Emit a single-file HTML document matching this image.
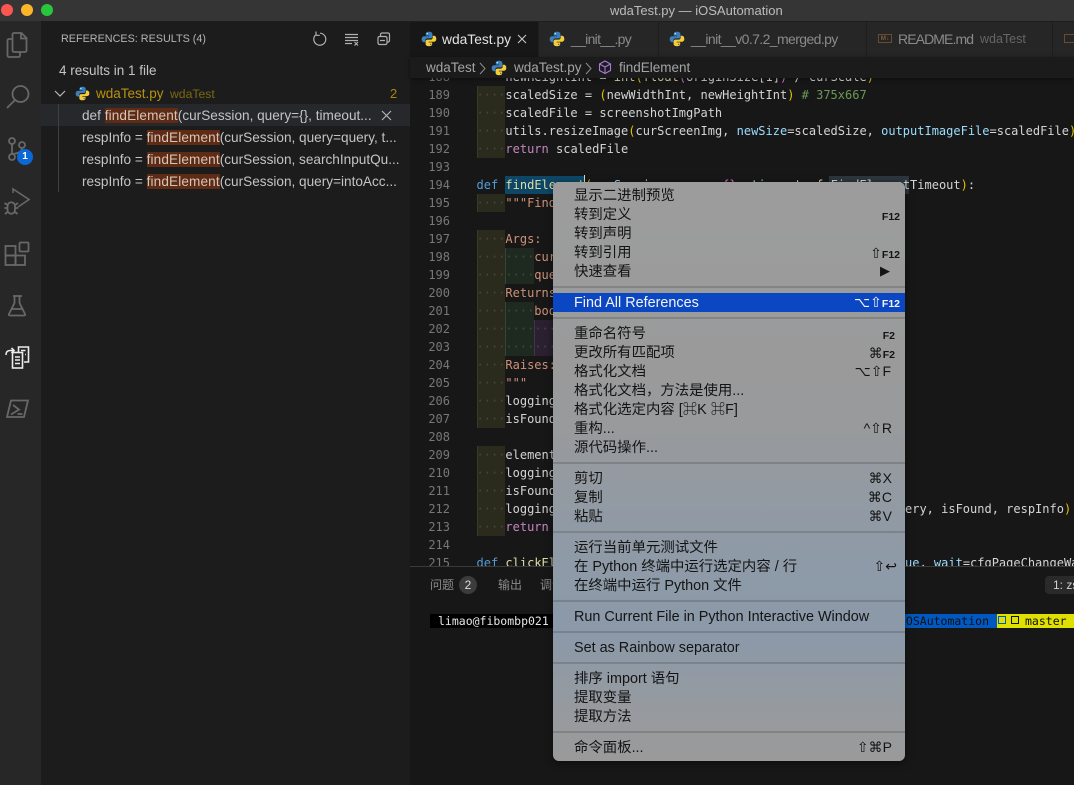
<!DOCTYPE html>
<html><head><meta charset="utf-8"><style>
*{box-sizing:border-box}
html,body{margin:0;padding:0;width:1074px;height:785px;overflow:hidden;background:#171717}
body{position:relative;font-family:"Liberation Sans","Noto Sans CJK SC",sans-serif}
.a{position:absolute;white-space:pre}
#ed{position:absolute;left:410px;top:78px;width:664px;height:490px;overflow:hidden;background:#171717}
#ed .l,#ed .n,#ed .g{position:absolute}
.n{left:0;width:40px;text-align:right;font:12px/18px "DejaVu Sans Mono",monospace;color:#777}
.l{left:66.5px;white-space:pre;font:12px/18px "DejaVu Sans Mono",monospace;color:#d4d4d4}
.d{color:#47473d}.k{color:#569cd6}.f{color:#dcdcaa}.r{color:#c586c0}.p{color:#9cdcfe}.c{color:#6a9955}.s{color:#ce9178}.y{color:#e5c100}.m{color:#da70d6}
.g1{background:#2a2a1d;border-left:1px solid #3a3a28}.g2{background:#1e2a20;border-left:1px solid #33453a}.g3{background:#2a2030;border-left:1px solid #42344a}
.row{position:absolute;left:82px;font-size:13.6px;line-height:22px;color:#c4c4c4;white-space:pre}
.row b{font-weight:normal;background:#5e2b14;color:#d6c4b8;letter-spacing:.12px}
.tab{position:absolute;top:22px;height:35px;background:#262626;line-height:35px;font-size:14px;color:#8a8a8a;white-space:pre}
#menu{position:absolute;left:553px;top:182px;width:352px;height:579px;border-radius:6px;overflow:hidden;background:linear-gradient(180deg,#9c9c9c 0%,#999a9b 40%,#8f9aa6 62%,#8b99a9 78%,#979a9e 92%,#9a9a9a 100%);box-shadow:0 2px 8px rgba(0,0,0,.5)}
#menu .i{position:absolute;left:21px;margin-top:1px;font-size:14.4px;line-height:20px;color:#141414;white-space:pre}
#menu .sc{position:absolute;text-align:right;font-size:14px;line-height:20px;color:#141414;white-space:pre;font-family:"Liberation Sans","DejaVu Sans",sans-serif}
#menu .sc small{font-size:10.5px;font-weight:bold}
#menu .h{position:absolute;left:0;width:352px;height:2px;background:rgba(60,60,60,.24)}
</style></head><body>
<svg width="0" height="0" style="position:absolute"><defs>
<symbol id="py" viewBox="0 0 16 16"><path d="M8 .8C5.3.8 4.8 1.900 4.800 3v1.600h3.400v.6H3.200C1.800 5.200.7 6.200.7 8.100s1 3.100 2.300 3.100h1.300V9.500c0-1.200.9-2.100 2.100-2.100h3.300c1 0 1.700-.8 1.700-1.800V3C11.300 1.800 10.300.8 8 .8z" fill="#3b7fbf"/><path d="M8 15.200c2.700 0 3.200-1.100 3.200-2.200v-1.600H7.800v-.6h5c1.400 0 2.500-1 2.500-2.900s-1-3.100-2.300-3.100h-1.300v1.700c0 1.200-.9 2.100-2.100 2.100H6.300c-1 0-1.700.8-1.700 1.800V13c.1 1.200 1.100 2.200 3.400 2.200z" fill="#f3cd3b"/><circle cx="6.300" cy="2.700" r=".7" fill="#cfe"/><circle cx="9.700" cy="13.300" r=".7" fill="#654"/></symbol>
</defs></svg>

<!-- title bar -->
<div class="a" style="left:0;top:0;width:1074px;height:21px;background:#353535"></div>
<div class="a" style="left:1px;top:4px;width:12px;height:12px;border-radius:50%;background:#fc5650"></div>
<div class="a" style="left:21px;top:4px;width:12px;height:12px;border-radius:50%;background:#fdb629"></div>
<div class="a" style="left:41px;top:4px;width:12px;height:12px;border-radius:50%;background:#28c73e"></div>
<div class="a" style="left:610px;top:2px;font-size:13px;line-height:17px;color:#bcbcbc">wdaTest.py — iOSAutomation</div>

<!-- activity bar -->
<div class="a" style="left:0;top:21px;width:41px;height:764px;background:#272727"></div>
<svg class="a" style="left:0;top:21px" width="41" height="420" fill="none" stroke="#686868" stroke-width="1.800">
<path d="M12 18H9a1.500 1.500 0 0 0-1.500 1.500V34.500A1.500 1.500 0 0 0 9 36h9.500a1.500 1.500 0 0 0 1.500-1.500V31"/>
<path d="M12.500 13.500a1.500 1.500 0 0 1 1.500-1.500h7.500l5 5v12.500a1.500 1.500 0 0 1-1.500 1.500H14a1.500 1.500 0 0 1-1.500-1.500zM21 12.500v5h5.500"/>
<circle cx="20.500" cy="73" r="8"/><path d="M15 79 7 87"/>
<circle cx="12" cy="120" r="3"/><circle cx="22" cy="124" r="3"/><circle cx="12" cy="136" r="3"/><path d="M12 123v10M22 127c0 4-4 5.500-10 6"/>
<path d="M13 172v-4l16 10.500L18 186" stroke-width="1.600"/><path d="M7.500 185a3.700 3.700 0 0 1 7.500 0v4a3.700 3.700 0 0 1-7.500 0zM4.500 182l3 2M18 182l-3 2M4.500 187h3M18 187h-3M5 193l3-2.500M17.500 193l-3-2.500"/>
<rect x="5.500" y="225" width="10" height="9.500"/><rect x="5.500" y="234.500" width="10" height="9.500"/><rect x="15.500" y="234.500" width="9.500" height="9.500"/><rect x="19.500" y="221.500" width="9" height="9" rx="1"/>
<path d="M13 275h9M14.500 275v7l-5.500 11c-.5 1 0 1.500 1 1.500h14c1 0 1.500-.5 1-1.500L19.500 282v-7M11 288h12"/>
<g stroke="#ececec" stroke-width="1.600"><path d="M6 334c0-3 1.500-4.500 4-4.500h3.500M11.500 327l2.500 2.500-2.500 2.500"/><path d="M18.500 331v-5h10v15H24"/><rect x="12.500" y="331.500" width="10" height="15.500" fill="#272727"/><path d="M15 336h5M15 339h5M15 342.500h5M21 329.500h4.500M25 333.500h.8"/></g>
<path d="M11 379.500h17l-4 16.500H7zM13 384l6 4.500-8 5M17.500 393h5"/>
</svg>
<div class="a" style="left:17px;top:149px;width:16px;height:16px;border-radius:50%;background:#0a69d6;color:#fff;font-size:10px;font-weight:bold;line-height:16px;text-align:center">1</div>

<!-- sidebar -->
<div class="a" style="left:41px;top:21px;width:369px;height:764px;background:#1c1c1c"></div>
<div class="a" style="left:61px;top:31px;font-size:10.8px;line-height:16px;color:#b4b4b4">REFERENCES: RESULTS (4)</div>
<svg class="a" style="left:310px;top:29px" width="85" height="20" fill="none" stroke="#b0b0b0" stroke-width="1.200">
<path d="M5.500 6a6 6 0 1 0 4.500-1.800M6 2.500v3.800h3.800"/>
<path d="M35 5.500h13M35 8.500h13M35 11.500h13M35 14.500h7M44.500 13l3.500 3.500M48 13l-3.500 3.500"/>
<rect x="68" y="7.500" width="9" height="8" rx="1.500"/><path d="M70.500 7.500V5.500a1.500 1.500 0 0 1 1.500-1.500h6a1.500 1.500 0 0 1 1.500 1.500v6a1.500 1.500 0 0 1-1.500 1.500H77M70 11.500h5"/>
</svg>
<div class="a" style="left:59px;top:62px;font-size:13.500px;line-height:18px;color:#c4c4c4">4 results in 1 file</div>
<svg class="a" style="left:54px;top:89px" width="13" height="10" fill="none" stroke="#b8b8b8" stroke-width="1.200"><path d="M1 2l5 5 5-5"/></svg>
<svg class="a" style="left:75px;top:86px" width="15" height="15"><use href="#py"/></svg>
<div class="a" style="left:96px;top:85px;font-size:13.500px;line-height:18px;color:#b8920c">wdaTest.py</div>
<div class="a" style="left:170px;top:85px;font-size:12.200px;line-height:18px;color:#7c6a10">wdaTest</div>
<div class="a" style="left:390px;top:85px;font-size:13px;line-height:18px;color:#a6860c">2</div>
<div class="a" style="left:41px;top:104px;width:369px;height:22px;background:#27282c"></div>
<div class="a" style="left:58px;top:104px;width:1px;height:88px;background:#404040"></div>
<div class="row" style="top:105px">def <b>findElement</b>(curSession, query={}, timeout...</div>
<div class="row" style="top:127px">respInfo = <b>findElement</b>(curSession, query=query, t...</div>
<div class="row" style="top:149px">respInfo = <b>findElement</b>(curSession, searchInputQu...</div>
<div class="row" style="top:171px">respInfo = <b>findElement</b>(curSession, query=intoAcc...</div>
<svg class="a" style="left:381px;top:110px" width="11" height="11" stroke="#b8b8b8" stroke-width="1.100"><path d="M1 1l9 9M10 1l-9 9"/></svg>

<!-- tabs -->
<div class="a" style="left:410px;top:21px;width:664px;height:36px;background:#1e1e1e"></div>
<div class="tab" style="left:410px;width:128px;background:#171717;color:#e2e2e2"><span style="position:absolute;left:32px;font-size:13.800px">wdaTest.py</span></div>
<svg class="a" style="left:421px;top:31px" width="16" height="16"><use href="#py"/></svg>
<svg class="a" style="left:517px;top:34px" width="10" height="10" stroke="#c8c8c8" stroke-width="1.100"><path d="M1 1l8 8M9 1l-8 8"/></svg>
<div class="tab" style="left:539px;width:119px"><span style="position:absolute;left:32px;letter-spacing:-.7px">__init__.py</span></div>
<svg class="a" style="left:549px;top:31px" width="16" height="16"><use href="#py"/></svg>
<div class="tab" style="left:659px;width:207px"><span style="position:absolute;left:32px;letter-spacing:-.6px">__init__v0.7.2_merged.py</span></div>
<svg class="a" style="left:669px;top:31px" width="16" height="16"><use href="#py"/></svg>
<div class="tab" style="left:867px;width:185px"><span style="position:absolute;left:31px;letter-spacing:-.9px">README.md</span><span style="position:absolute;left:113px;font-size:12.500px;color:#666">wdaTest</span></div>
<div class="a" style="left:878px;top:34px;width:14px;height:9px;border:1px solid #6a4a30;color:#7a5a3a;font-size:6.500px;line-height:7px;text-align:center;font-weight:bold">M↓</div>
<div class="tab" style="left:1053px;width:21px"></div>
<div class="a" style="left:1064px;top:34px;width:12px;height:9px;border:1px solid #6a4a30"></div>

<!-- breadcrumbs -->
<div class="a" style="left:410px;top:57px;width:664px;height:21px;background:#1b1b1b;box-shadow:0 1px 4px rgba(0,0,0,.5);z-index:2"></div>
<div style="position:absolute;z-index:3;left:426px;top:59px;font-size:13.500px;line-height:18px;color:#a4a4a4;white-space:pre">wdaTest</div>
<svg class="a" style="left:478px;top:61px;z-index:3" width="130" height="15" fill="none" stroke="#8e8e8e" stroke-width="1"><path d="M2 2l5 5.500-5 5.500"/><path d="M108 2l5 5.500-5 5.500"/></svg>
<svg class="a" style="left:491px;top:60px;z-index:3" width="16" height="16"><use href="#py"/></svg>
<div style="position:absolute;z-index:3;left:514px;top:59px;font-size:13.500px;line-height:18px;color:#a4a4a4;white-space:pre">wdaTest.py</div>
<svg class="a" style="left:598px;top:60px;z-index:3" width="15" height="15" fill="none" stroke="#a77ad8" stroke-width="1.100"><path d="M7 1l5.500 3v6.500L7 13.500 1.500 10.500V4zM1.500 4L7 7l5.500-3M7 7v6.500"/></svg>
<div style="position:absolute;z-index:3;left:619px;top:59px;font-size:13.500px;line-height:18px;color:#a4a4a4;white-space:pre">findElement</div>

<!-- editor -->
<div id="ed">
<div class="g g1" style="left:67px;top:8px;width:28px;height:72px"></div>
<div class="g g1" style="left:67px;top:116px;width:28px;height:18px"></div>
<div class="g g1" style="left:67px;top:152px;width:28px;height:198px"></div>
<div class="g g1" style="left:67px;top:368px;width:28px;height:90px"></div>
<div class="g g2" style="left:95px;top:170px;width:29px;height:36px"></div>
<div class="g g2" style="left:95px;top:224px;width:29px;height:54px"></div>
<div class="g g3" style="left:124px;top:242px;width:29px;height:36px"></div>
<div class="g" style="left:95px;top:98px;width:79px;height:18px;background:#0e4766"></div>
<div class="g" style="left:174px;top:97px;width:1px;height:19px;background:#d8d8d8"></div>
<div class="g" style="left:419px;top:98px;width:80px;height:18px;background:#2c363c"></div>

<div class="n" style="top:-10px">188</div><div class="l" style="top:-10px"><span class="d">····</span>newHeightInt = <span class="f">int</span><span class="y">(</span><span class="f">float</span><span class="m">(</span>originSize[1]<span class="m">)</span> / curScale<span class="y">)</span></div>
<div class="n" style="top:8px">189</div><div class="l" style="top:8px"><span class="d">····</span>scaledSize = <span class="y">(</span>newWidthInt, newHeightInt<span class="y">)</span> <span class="c"># 375x667</span></div>
<div class="n" style="top:26px">190</div><div class="l" style="top:26px"><span class="d">····</span>scaledFile = screenshotImgPath</div>
<div class="n" style="top:44px">191</div><div class="l" style="top:44px"><span class="d">····</span>utils.resizeImage<span class="y">(</span>curScreenImg, <span class="p">newSize</span>=scaledSize, <span class="p">outputImageFile</span>=scaledFile<span class="y">)</span></div>
<div class="n" style="top:62px">192</div><div class="l" style="top:62px"><span class="d">····</span><span class="r">return</span> scaledFile</div>
<div class="n" style="top:80px">193</div>
<div class="n" style="top:98px">194</div><div class="l" style="top:98px"><span class="k">def</span> <span class="f">findElement</span><span class="y">(</span><span class="p">curSession</span>, <span class="p">query</span>=<span class="m">{}</span>, <span class="p">timeout</span>=cfgFindElementTimeout<span class="y">)</span>:</div>
<div class="n" style="top:116px">195</div><div class="l" style="top:116px"><span class="d">····</span><span class="s">"""Find</span></div>
<div class="n" style="top:134px">196</div>
<div class="n" style="top:152px">197</div><div class="l" style="top:152px"><span class="d">····</span><span class="s">Args:</span></div>
<div class="n" style="top:170px">198</div><div class="l" style="top:170px"><span class="d">········</span><span class="s">cur</span></div>
<div class="n" style="top:188px">199</div><div class="l" style="top:188px"><span class="d">········</span><span class="s">que</span></div>
<div class="n" style="top:206px">200</div><div class="l" style="top:206px"><span class="d">····</span><span class="s">Returns:</span></div>
<div class="n" style="top:224px">201</div><div class="l" style="top:224px"><span class="d">········</span><span class="s">boo</span></div>
<div class="n" style="top:242px">202</div><div class="l" style="top:242px"><span class="d">············</span></div>
<div class="n" style="top:260px">203</div><div class="l" style="top:260px"><span class="d">············</span></div>
<div class="n" style="top:278px">204</div><div class="l" style="top:278px"><span class="d">····</span><span class="s">Raises:</span></div>
<div class="n" style="top:296px">205</div><div class="l" style="top:296px"><span class="d">····</span><span class="s">"""</span></div>
<div class="n" style="top:314px">206</div><div class="l" style="top:314px"><span class="d">····</span>logging</div>
<div class="n" style="top:332px">207</div><div class="l" style="top:332px"><span class="d">····</span>isFound</div>
<div class="n" style="top:350px">208</div>
<div class="n" style="top:368px">209</div><div class="l" style="top:368px"><span class="d">····</span>element</div>
<div class="n" style="top:386px">210</div><div class="l" style="top:386px"><span class="d">····</span>logging</div>
<div class="n" style="top:404px">211</div><div class="l" style="top:404px"><span class="d">····</span>isFound</div>
<div class="n" style="top:422px">212</div><div class="l" style="top:422px"><span class="d">····</span>logging</div>
<div class="l" style="left:495px;top:422px">ery, isFound, respInfo<span class="y">)</span></div>
<div class="n" style="top:440px">213</div><div class="l" style="top:440px"><span class="d">····</span><span class="r">return</span></div>
<div class="n" style="top:458px">214</div>
<div class="n" style="top:476px">215</div><div class="l" style="top:476px"><span class="k">def</span> <span class="f">clickEl</span></div>
<div class="l" style="left:495px;top:476px"><span class="p">ue</span>, <span class="p">wait</span>=cfgPageChangeWa</div>
</div>

<!-- panel -->
<div class="a" style="left:410px;top:566px;width:664px;height:219px;background:#171717;border-top:1px solid #3a3a3a"></div>
<div class="a" style="left:430px;top:576px;font-size:12px;line-height:18px;color:#8a8a8a">问题</div>
<div class="a" style="left:459px;top:576px;width:18px;height:18px;border-radius:50%;background:#3c3c3c;color:#ddd;font-size:12px;line-height:18px;text-align:center">2</div>
<div class="a" style="left:498px;top:576px;font-size:12px;line-height:18px;color:#8a8a8a">输出</div>
<div class="a" style="left:540px;top:576px;font-size:12px;line-height:18px;color:#8a8a8a">调试</div>
<div class="a" style="left:1045px;top:576px;width:40px;height:18px;border-radius:4px;background:#2a2a2a;color:#d0d0d0;font-size:12px;line-height:18px;padding-left:8px">1: zsh</div>
<div class="a" style="left:430px;top:614px;width:124px;height:14px;background:#000;color:#e6e6e6;font:11.500px/14px 'DejaVu Sans Mono',monospace;padding-left:8px">limao@fibombp021</div>
<div class="a" style="left:899px;top:614px;width:98px;height:14px;background:#0058c0;color:#101010;font:11.500px/14px 'DejaVu Sans Mono',monospace">iOSAutomation</div>
<div class="a" style="left:997px;top:614px;width:77px;height:14px;background:#e0e000;color:#101010;font:11.500px/14px 'DejaVu Sans Mono',monospace;padding-left:28px">master</div>
<div class="a" style="left:998px;top:616px;width:8px;height:8px;border:1.500px solid #0058c0"></div>
<div class="a" style="left:1011px;top:616px;width:8px;height:8px;border:1.500px solid #111"></div>

<!-- context menu -->
<div id="menu">
<div class="i" style="top:3px">显示二进制预览</div>
<div class="i" style="top:22px">转到定义</div><div class="sc" style="right:5px;top:23px"><small>F12</small></div>
<div class="i" style="top:41px">转到声明</div>
<div class="i" style="top:60px">转到引用</div><div class="sc" style="right:5px;top:61px">⇧<small>F12</small></div>
<div class="i" style="top:79px">快速查看</div><div class="sc" style="right:15px;top:79px;font-size:13px">▶</div>
<div class="h" style="top:104px"></div>
<div style="position:absolute;left:0;top:111px;width:352px;height:19px;background:#0b47c2"></div>
<div class="i" style="top:110px;color:#f4f4f4">Find All References</div><div class="sc" style="right:5px;top:110px;color:#f4f4f4">⌥⇧<small>F12</small></div>
<div class="h" style="top:135px"></div>
<div class="i" style="top:141px">重命名符号</div><div class="sc" style="right:10px;top:142px"><small>F2</small></div>
<div class="i" style="top:160px">更改所有匹配项</div><div class="sc" style="right:10px;top:161px">⌘<small>F2</small></div>
<div class="i" style="top:179px">格式化文档</div><div class="sc" style="right:14px;top:179px">⌥⇧F</div>
<div class="i" style="top:198px">格式化文档，方法是使用...</div>
<div class="i" style="top:217px">格式化选定内容 [⌘K ⌘F]</div>
<div class="i" style="top:236px">重构...</div><div class="sc" style="right:13px;top:236px">^⇧R</div>
<div class="i" style="top:255px">源代码操作...</div>
<div class="h" style="top:280px"></div>
<div class="i" style="top:286px">剪切</div><div class="sc" style="right:13px;top:286px">⌘X</div>
<div class="i" style="top:305px">复制</div><div class="sc" style="right:13px;top:305px">⌘C</div>
<div class="i" style="top:324px">粘贴</div><div class="sc" style="right:13px;top:324px">⌘V</div>
<div class="h" style="top:349px"></div>
<div class="i" style="top:355px">运行当前单元测试文件</div>
<div class="i" style="top:374px">在 Python 终端中运行选定内容 / 行</div><div class="sc" style="right:8px;top:374px">⇧↩</div>
<div class="i" style="top:393px">在终端中运行 Python 文件</div>
<div class="h" style="top:418px"></div>
<div class="i" style="top:424px">Run Current File in Python Interactive Window</div>
<div class="h" style="top:449px"></div>
<div class="i" style="top:455px">Set as Rainbow separator</div>
<div class="h" style="top:480px"></div>
<div class="i" style="top:486px">排序 import 语句</div>
<div class="i" style="top:505px">提取变量</div>
<div class="i" style="top:524px">提取方法</div>
<div class="h" style="top:549px"></div>
<div class="i" style="top:555px">命令面板...</div><div class="sc" style="right:13px;top:555px">⇧⌘P</div>
</div>
</body></html>
